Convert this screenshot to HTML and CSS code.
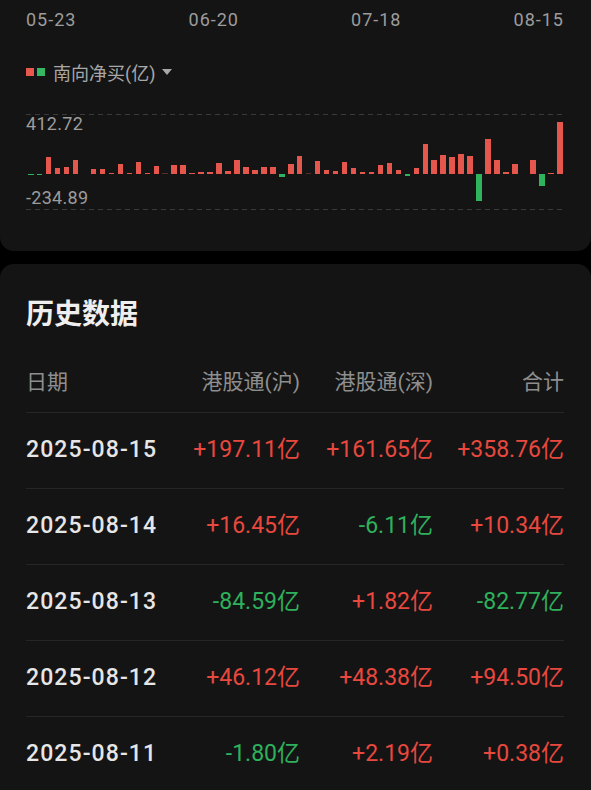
FILE: index.html
```html
<!DOCTYPE html>
<html lang="zh-CN">
<head>
<meta charset="UTF-8">
<meta name="viewport" content="width=device-width, initial-scale=1.0">
<title>南向资金</title>
<link rel="stylesheet" href="styles.css">
</head>
<body>
<div class="card chart-card">
    <div class="axis-dates">
        <span>05-23</span>
        <span>06-20</span>
        <span>07-18</span>
        <span>08-15</span>
    </div>
    <div class="legend">
        <i class="swatch red"></i><i class="swatch green"></i>
        <span class="legend-text">南向净买(亿)</span>
        <svg class="caret" width="10" height="6" viewBox="0 0 10 6"><polygon points="0,0 10,0 5,6" fill="#a8a8a8"/></svg>
    </div>
    <div class="plot">
        <div class="rule"></div>
        <div class="bars" id="bars"></div>
        <div class="rule"></div>
        <span class="y-label y-top">412.72</span>
        <span class="y-label y-bottom">-234.89</span>
    </div>
</div>

<div class="card table-card">
    <h2>历史数据</h2>
    <div class="row head">
        <span>日期</span>
        <span class="num">港股通(沪)</span>
        <span class="num">港股通(深)</span>
        <span class="num">合计</span>
    </div>
    <div class="row">
        <span class="date">2025-08-15</span>
        <span class="num up">+197.11亿</span>
        <span class="num up">+161.65亿</span>
        <span class="num up">+358.76亿</span>
    </div>
    <div class="row">
        <span class="date">2025-08-14</span>
        <span class="num up">+16.45亿</span>
        <span class="num down">-6.11亿</span>
        <span class="num up">+10.34亿</span>
    </div>
    <div class="row">
        <span class="date">2025-08-13</span>
        <span class="num down">-84.59亿</span>
        <span class="num up">+1.82亿</span>
        <span class="num down">-82.77亿</span>
    </div>
    <div class="row">
        <span class="date">2025-08-12</span>
        <span class="num up">+46.12亿</span>
        <span class="num up">+48.38亿</span>
        <span class="num up">+94.50亿</span>
    </div>
    <div class="row">
        <span class="date">2025-08-11</span>
        <span class="num down">-1.80亿</span>
        <span class="num up">+2.19亿</span>
        <span class="num up">+0.38亿</span>
    </div>
</div>

<script>
// 南向净买 每日数据 (亿), 05-23 ~ 08-15
const netBuy = [
    -10, -10, 117, 41, 48, 96, 0, 34, 35, 8,
    69, 8, 83, 8, 55, 3, 62, 62, 8, 14,
    14, 76, 21, 96, 48, 28, 48, 48, -24, 69,
    124, 3, 89, 28, 21, 83, 41, 14, 14, 62,
    76, 28, -14, 41, 206, 96, 131, 117, 138, 124,
    -186, 241, 96, 14, 69, 0.38, 94.50, -82.77, 10.34, 358.76
];
const pxPerYi = 60 / 412.72;
const bars = document.getElementById('bars');

netBuy.forEach(function(v) {
    const col = document.createElement('div');
    col.className = 'col';
    const upper = document.createElement('div');
    upper.className = 'upper';
    const lower = document.createElement('div');
    lower.className = 'lower';

    const h = Math.abs(v) * pxPerYi;
    if (h >= 0.1) {
        const bar = document.createElement('div');
        bar.className = v > 0 ? 'bar red' : 'bar green';
        if (h < 1) bar.classList.add('faint');
        bar.style.height = Math.max(h, 1) + 'px';
        (v > 0 ? upper : lower).appendChild(bar);
    }
    col.appendChild(upper);
    col.appendChild(lower);
    bars.appendChild(col);
});
</script>
</body>
</html>
```

FILE: styles.css
```css
body {
    margin: 0;
    padding: 0;
    background-color: #000;
    font-family: Roboto, "Noto Sans CJK SC", sans-serif;
    color: #e8e8e8;
}
.card {
    background-color: #141414;
}
.chart-card {
    padding: 8px 27px 41px 26px;
    border-radius: 0 0 14px 14px;
    margin-bottom: 13px;
}
.axis-dates {
    display: flex;
    justify-content: space-between;
    height: 24px;
    line-height: 24px;
    font-size: 18px;
    letter-spacing: 1px;
    color: #9c9c9c;
}
.legend {
    display: flex;
    align-items: center;
    margin-top: 28px;
    height: 24px;
}
.swatch {
    display: block;
    width: 8px;
    height: 8px;
    margin-right: 3px;
}
.swatch.red {
    background-color: #e8584e;
}
.swatch.green {
    background-color: #35b862;
    margin-right: 8px;
}
.legend-text {
    font-size: 18px;
    color: #a8a8a8;
}
.caret {
    margin-left: 7px;
}
.plot {
    position: relative;
    margin-top: 30px;
}
.rule {
    height: 1px;
    background-image: repeating-linear-gradient(90deg, #3a3a3a 0 5px, transparent 5px 9px);
}
.bars {
    display: grid;
    grid-template-columns: repeat(60, 1fr);
    margin-left: 2px;
    margin-right: -2px;
}
.col {
    display: flex;
    flex-direction: column;
}
.upper {
    height: 59px;
    display: flex;
    flex-direction: column;
    justify-content: flex-end;
}
.lower {
    height: 35px;
}
.bar {
    width: 5.5px;
}
.bar.red {
    background-color: #e5574d;
}
.bar.green {
    background-color: #2fb45d;
}
.bar.faint {
    opacity: 0.35;
}
.y-label {
    position: absolute;
    left: 0;
    font-size: 18px;
    line-height: 20px;
    letter-spacing: 0.3px;
    color: #9c9c9c;
}
.y-top {
    top: 0;
}
.y-bottom {
    bottom: 2px;
}
.table-card {
    padding: 34px 27px 0 26px;
    border-radius: 14px 14px 0 0;
}
.table-card h2 {
    margin: 0 0 20px;
    font-size: 28px;
    line-height: 34px;
    font-weight: bold;
    color: #efefef;
}
.row {
    display: grid;
    grid-template-columns: 1fr 140px 133px 131px;
    align-items: center;
    height: 73px;
    padding-bottom: 2px;
    border-bottom: 1px solid #262626;
    font-size: 23px;
    line-height: 30px;
}
.row.head {
    height: 60px;
    padding-bottom: 0;
    font-size: 21px;
    color: #8e8e8e;
}
.num {
    text-align: right;
}
.date {
    font-weight: 500;
    letter-spacing: 1.1px;
    color: #e6e6e6;
}
.up {
    color: #e8483e;
}
.down {
    color: #2eb05c;
}
```
